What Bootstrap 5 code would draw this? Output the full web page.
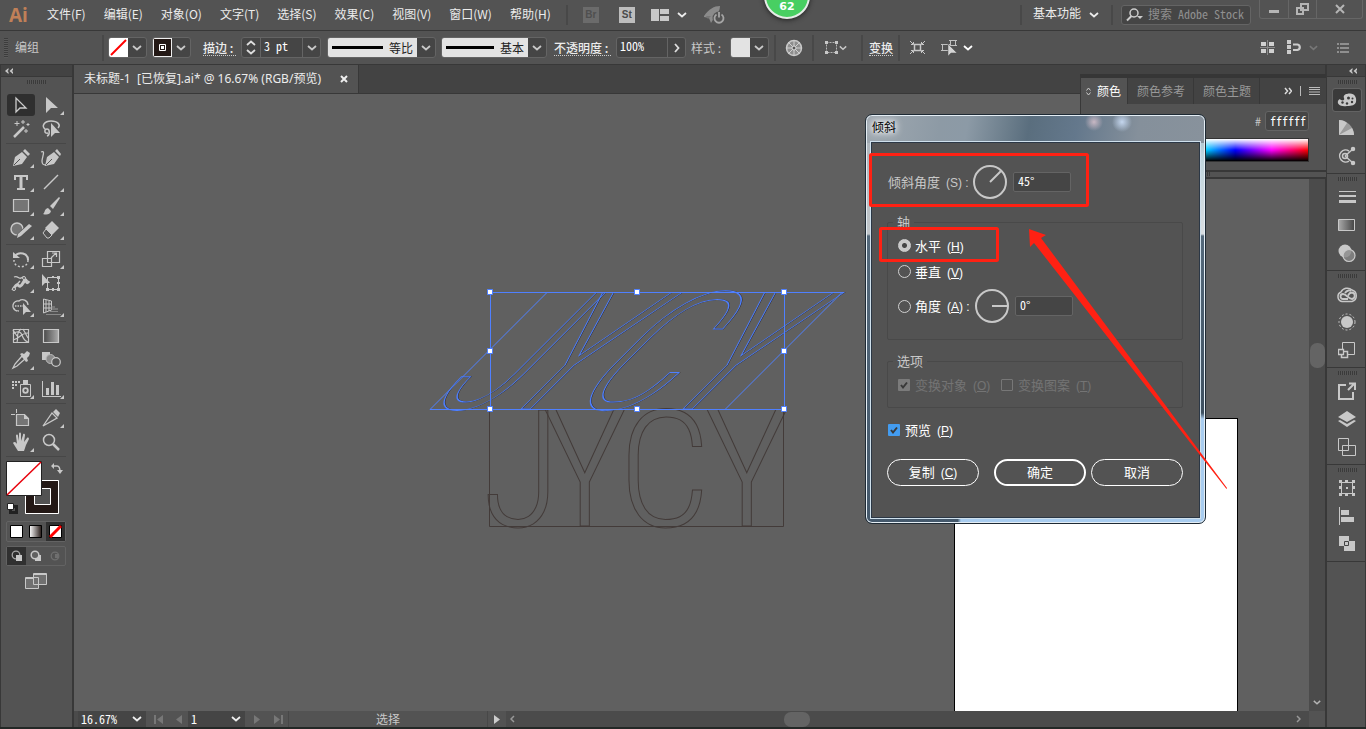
<!DOCTYPE html>
<html lang="zh-CN">
<head>
<meta charset="utf-8">
<meta name="viewport" content="width=device-width, initial-scale=1">
<title>未标题-1 [已恢复].ai</title>
<link href="https://cdn.jsdelivr.net/npm/bootstrap@5.3.0/dist/css/bootstrap.min.css" rel="stylesheet">
<style>
:root{--bar:#535353;--deep:#434343;--edge:#383838;--ink:#c8c8c8;--bright:#ececec;--box:#454545;--rim:#646464;--mono:"Noto Sans Mono CJK SC","Noto Sans CJK SC",monospace}
body{font:12px/16px "Noto Sans CJK SC","Liberation Sans",sans-serif;color:var(--ink);background:#232826;overflow:hidden}
.mono{font-family:var(--mono)}
svg{display:block;flex:none}
button.flat{background:none;border:0;padding:0;color:inherit;display:flex;align-items:center;justify-content:center}
a.menu-link{color:var(--bright);text-decoration:none}
.app-bar{height:31px;background:var(--bar);border-bottom:1px solid var(--edge)}
.menu-list{gap:18px;margin-left:19px;padding-bottom:2px}
.brand-mark{font:bold 19px/26px "Open Sans","Liberation Sans",sans-serif;color:#c08058;margin-left:9px}
.vline{width:2px;height:20px;background:#484848;flex:none}
.vline.tall{height:26px}
button.st-chip{width:16px;height:16px;font:bold 10px/16px "Liberation Sans",sans-serif;background:#bdbdbd;color:#4a4a4a}
button.st-chip.dim{background:#6b6b6b;color:#4f4f4f}
.search-box{width:130px;height:20px;background:var(--box);border:1px solid var(--rim);border-radius:3px}
.search-box input{background:none;border:0;outline:0;padding:0 0 2px;width:104px;font:12px/16px var(--mono);color:#999}
.search-box input::placeholder{color:#8f8f8f;opacity:1}
.win-keys{border:1px solid #666;border-top:0;border-radius:0 0 3px 3px;height:19px;align-self:flex-start;margin-right:3px}
.win-keys button+button{border-left:1px solid #666}
.opt-bar{height:34px;background:var(--bar);border-bottom:1px solid var(--edge)}
.grip-v{width:4px;height:20px;background:repeating-linear-gradient(#3c3c3c 0 1px,#5b5b5b 1px 2px)}
.grip-h{width:19px;height:4px;background:repeating-linear-gradient(90deg,#3a3a3a 0 1px,#565656 1px 2px)}
.combo{height:21px;border:1px solid var(--rim);border-radius:3px;background:var(--box);overflow:hidden;display:flex;flex:none}
.combo>button.flat{width:18px}
.combo>button+input,.combo>input+button.flat{border-left:1px solid var(--rim)}
.combo input{background:none;border:0;outline:0;padding:0 0 3px 3px;font:12px/16px var(--mono);color:#fff;min-width:0}
.swatch{width:19px;height:19px}
.stroke-view{background:#e3e3e3;color:#222;gap:6px;padding:0 4px}
.dotted{border-bottom:1px dotted #ccc;color:var(--bright);line-height:15px;font-weight:500;white-space:nowrap}
.tool-dock{width:74px;background:var(--bar);border-left:1px solid var(--edge);border-right:2px solid var(--edge)}
.dock-head{height:12px;background:var(--deep);border-bottom:1px solid var(--edge);flex:none}
.tool-grid{display:grid;grid-template-columns:30px 30px}
.tool-grid button{height:24px;position:relative}
.tool-grid .has-more::after{content:"";position:absolute;right:2px;bottom:2px;border:solid transparent;border-width:0 0 4px 4px;border-bottom-color:var(--ink)}
.tool-grid .chosen::before{content:"";position:absolute;inset:1px 1px;background:#2f2f2f;border-radius:3px}
.tool-grid .chosen svg{position:relative}
.tool-rule{height:1px;margin:2px 0;background:#474747}
.key-row{border:1px solid #636363;border-radius:2px;height:20px}
.key-row button{flex:1}
.key-row button.chosen{background:#303030}
.tab-strip{height:29px;background:var(--deep);border-bottom:1px solid var(--edge)}
.doc-tab{background:var(--bar);border-right:1px solid var(--edge);padding:0 10px;gap:19px;color:var(--bright);height:28px;font-family:"Noto Sans","Noto Sans CJK SC",sans-serif;white-space:nowrap}
.board{background:#606060;overflow:hidden}
.artboard{position:absolute;right:71px;top:324px;width:284px;bottom:0;background:#fff;border:1px solid #000;border-bottom:0}
.artwork{position:absolute;left:356px;top:190px;overflow:visible}
.artwork text{font-family:"Roboto Condensed","Liberation Sans Narrow",sans-serif;font-weight:300;fill:none;stroke-width:1}
.scroll-v{width:16px;background:#4b4b4b;padding-bottom:6px}
.thumb-v{width:15px;height:25px;border-radius:7px;background:#646464;margin-top:249px}
.doc-edge{border-right:2px solid var(--edge)}
.foot-bar{height:16px;background:#4b4b4b}
.foot-bar input{background:var(--box);border:0;outline:0;padding:0 0 0 3px;font:12px/16px var(--mono);color:#fff;height:16px}
.foot-bar .step{background:var(--bar);width:22px;height:16px;color:#777}
.foot-bar .step.drop{background:var(--box);width:18px;color:#eee}
.thumb-h{width:26px;height:15px;border-radius:7px;background:#646464}
.right-dock{width:39px;background:var(--bar);border-right:1px solid var(--edge);flex:none}
.dock-set{height:97px;padding:3px 0 0 2px;border-bottom:1px solid var(--edge);gap:2px}
.dock-set button.flat{width:28px;height:28px}
.dock-set button.chosen{background:#3a3a3a;outline:1px solid #636363;border-radius:2px;height:22px;margin:3px 0}
.swatch-panel{position:absolute;right:40px;top:74px;width:246px;background:var(--bar);border-top:4px solid #363636;border-left:1px solid var(--edge)}
.panel-tabs{background:var(--deep);height:26px}
.panel-tabs button.ptab{height:26px;border-right:1px solid var(--edge);padding:0 8px 0 9px;color:#999}
.panel-tabs button.ptab.open{background:var(--bar);color:#fff;padding:0 6px 0 5px;gap:6px}
.hex-row{height:34px;padding-right:17px;gap:4px}
.hex-row input{width:44px;height:20px;border:1px solid var(--rim);border-radius:3px;background:var(--box);color:#fff;font:12px/16px var(--mono);padding:0 0 2px 4px;outline:0}
.spectrum{height:24px;margin:0 17px 8px 8px;border:1px solid #333;background:linear-gradient(#fff,rgba(255,255,255,0) 50%,rgba(0,0,0,0) 50%,#000),linear-gradient(90deg,red,#ff0,lime,cyan,blue,#f0f,red)}
.panel-next{height:9px;border-top:2px solid var(--edge);border-bottom:2px solid var(--edge);padding-left:110px}
.badge-ball{position:absolute;left:764px;top:-27px;width:46px;height:46px;border-radius:50%;background:#48cf62;border:2px solid #e6ece8;box-shadow:0 1px 5px #222;color:#fff;font:bold 11px/14px "DejaVu Sans",sans-serif;text-align:center;padding-top:25px}
.shear-box{position:absolute;right:160px;top:114px;width:341px;border:1px solid #1e2a34;border-radius:7px;box-shadow:inset 0 0 0 1px #e4edf4;padding:0 5px 5px;background:linear-gradient(90deg,transparent 27%,#a9cdf0 28%) 0 100%/100% 6px no-repeat,radial-gradient(circle at 228px 7px,#c8b8c4 0,transparent 9px),radial-gradient(circle at 256px 7px,#c4d6ee 0,transparent 10px),linear-gradient(100deg,#a0a9b1 0,#8d9aa5 22%,#8c9aa6 30%,#6b7d8b 42%,#5a6e7e 48%,#64788c 62%,#85909b 80%,#88929c 100%) 0 0/100% 28px no-repeat,linear-gradient(#8fa0ac,#a8c0c9 18px,#c0d6de 40px,#d8dde1 119px,#54697b 121px,#3e5060 298px,#a9cdf0 304px) 100% 0/8px 100% no-repeat,linear-gradient(#a9b1b8,#c0c5c9 119px,#54697b 121px,#44586b)}
.shear-head{height:27px;color:#000;padding:0 0 3px 1px;text-shadow:0 0 5px #fff,0 0 8px #fff,0 0 10px #fff}
.shear-body{background:var(--bar);border:1px solid #2b3745;outline:1px solid #cfe0ec;padding:14px 16px 30px 15px;font:13px/18px var(--mono);color:#fff;height:376px}
.shear-body label{white-space:nowrap}
.shear-body .hot{font:12px/16px "Liberation Sans",sans-serif;margin-left:6px}
.shear-body input[type=text]{width:58px;height:20px;background:var(--box);border:1px solid var(--rim);border-radius:2px;color:#fff;font:12px/16px var(--mono);padding:0 0 3px 4px;outline:0}
.shear-set{border:1px solid #494949;border-radius:2px;position:relative;padding:0 9px 0 10px}
.shear-set legend{position:absolute;left:5px;top:-10px;width:auto;margin:0;padding:0 4px;background:var(--bar);font-size:13px;line-height:18px;color:var(--ink);float:none}
input.ring{appearance:none;width:13px;height:13px;margin:0;border:1px solid #d0d0d0;border-radius:50%;flex:none}
input.ring:checked{background:radial-gradient(circle,#444 2px,#c8c8c8 3px)}
input.tick{appearance:none;width:12px;height:12px;margin:0;border:1px solid #d0d0d0;border-radius:1px;flex:none}
input.tick:disabled{border-color:#777}
input.tick:checked{border:0;background:#439cf0 url("data:image/svg+xml,%3Csvg xmlns='http://www.w3.org/2000/svg' viewBox='0 0 12 12'%3E%3Cpath d='M3 6l2 2.500 4-5' fill='none' stroke='%23383838' stroke-width='2'/%3E%3C/svg%3E")}
input.tick:checked:disabled{background-color:#7b7b7b}
.faded{color:#747474}
.pill{width:92px;height:27px;border:1px solid #fff;border-radius:14px;background:none;color:#fff;font:13px/18px var(--mono);padding:0 0 2px}
.pill.main{border-width:2px}
.callout-marks{position:absolute;left:0;top:37px;pointer-events:none;overflow:visible}
</style>
</head>
<body class="vh-100 d-flex flex-column position-relative">
<svg width="0" height="0" class="position-absolute" aria-hidden="true">
<symbol id="chev" viewBox="0 0 10 6"><path d="M1 1l4 3.500L9 1" fill="none" stroke="currentColor" stroke-width="1.800"/></symbol>
<symbol id="dbl" viewBox="0 0 8 6"><path d="M3.500 0L0 3l3.500 3V4L2.500 3l1-1zM8 0L4.500 3 8 6V4L7 3l1-1z" fill="currentColor"/></symbol>
</svg>

<header class="app-bar d-flex align-items-center flex-shrink-0">
<div class="brand-mark">Ai</div>
<nav class="d-flex menu-list">
<a class="menu-link" href="#">文件(F)</a><a class="menu-link" href="#">编辑(E)</a><a class="menu-link" href="#">对象(O)</a><a class="menu-link" href="#">文字(T)</a><a class="menu-link" href="#">选择(S)</a><a class="menu-link" href="#">效果(C)</a><a class="menu-link" href="#">视图(V)</a><a class="menu-link" href="#">窗口(W)</a><a class="menu-link" href="#">帮助(H)</a>
</nav>
<div class="vline" style="margin-left:15px"></div>
<div class="d-flex align-items-center" style="margin-left:15px">
<button class="flat st-chip dim">Br</button>
<button class="flat st-chip" style="margin-left:20px">St</button>
<button class="flat ms-3 gap-2" aria-label="排列文档"><svg width="18" height="12" fill="#c8c8c8"><path d="M0 0h8v12H0zM9 0h9v5H9zM9 7h9v5H9z"/></svg><svg width="10" height="6" color="#ececec"><use href="#chev"/></svg></button>
<button class="flat ms-3" aria-label="GPU 性能"><svg width="24" height="20"><path d="M1 11C6 4 11 1 17 1c0 4-2 8-6 12l-3 5-2-5-5-1z" fill="#8b8b8b"/><path d="M3 11h5l-3 3z" fill="#777"/><circle cx="16" cy="13" r="6.500" fill="#535353"/><path d="M13.500 9.500a4.500 4.500 0 1 0 5 0M16 7v5.500" fill="none" stroke="#a5a5a5" stroke-width="1.800"/></svg></button>
</div>
<div class="ms-auto d-flex align-items-center h-100">
<div class="vline"></div>
<button class="flat gap-2" style="margin:0 12px 4px 11px;color:#ececec">基本功能 <svg width="10" height="6" class="mt-1"><use href="#chev"/></svg></button>
<div class="vline"></div>
<label class="search-box d-flex align-items-center mx-2 px-1" aria-label="搜索"><svg width="18" height="14"><circle cx="8" cy="5" r="4" fill="none" stroke="#ccc" stroke-width="1.500"/><path d="M5.500 8L1 12.500" stroke="#ccc" stroke-width="2"/><path d="M11 8h6l-3 3z" fill="#ccc"/></svg><input class="ms-1" type="text" placeholder="搜索 Adobe Stock"></label>
<div class="win-keys d-flex">
<button class="flat" style="width:28px" aria-label="最小化"><svg width="10" height="10"><path d="M0 6h10v3H0z" fill="#b5b5b5"/></svg></button>
<button class="flat" style="width:28px" aria-label="还原"><svg width="13" height="12" fill="none" stroke="#b5b5b5" stroke-width="2"><path d="M5 1h7v6H5zM1 5h6v6H1z" fill="#535353"/></svg></button>
<button class="flat" style="width:46px" aria-label="关闭"><svg width="10" height="10"><path d="M1 1l8 8M9 1L1 9" stroke="#b5b5b5" stroke-width="2"/></svg></button>
</div>
</div>
</header>

<div class="opt-bar d-flex align-items-center flex-shrink-0">
<div class="grip-v ms-1"></div>
<span style="margin:0 63px 2px 7px">编组</span>
<div class="vline tall"></div>
<div class="combo ms-1"><svg class="swatch"><path d="M0 0h19v19H0z" fill="#fff"/><path d="M2 17L17 2" stroke="red" stroke-width="2"/></svg><button class="flat" aria-label="填色"><svg width="10" height="6"><use href="#chev"/></svg></button></div>
<div class="combo" style="margin-left:5px"><svg class="swatch"><path d="M0 0h19v19H0z" fill="#231815" stroke="#eee" stroke-width="2"/><path d="M6.500 6.500h6v6h-6z" fill="none" stroke="#fff"/><path d="M8 8h3v3H8z" fill="#fff"/></svg><button class="flat" aria-label="描边颜色"><svg width="10" height="6"><use href="#chev"/></svg></button></div>
<label class="dotted" style="margin:0 5px 0 12px;width:33px" for="weight">描边 :</label>
<div class="combo"><button class="flat" aria-label="增减"><svg width="10" height="15" fill="none" stroke="#ddd" stroke-width="1.800"><path d="M1 5l4-3.500L9 5M1 10l4 3.500L9 10"/></svg></button><input id="weight" type="text" value="3 pt" style="width:42px"><button class="flat" aria-label="粗细"><svg width="10" height="6"><use href="#chev"/></svg></button></div>
<div class="combo" style="margin-left:6px"><div class="stroke-view d-flex align-items-center"><svg width="51" height="3"><path d="M0 0h51v3H0z"/></svg>等比</div><button class="flat" aria-label="宽度配置"><svg width="10" height="6"><use href="#chev"/></svg></button></div>
<div class="combo" style="margin-left:5px"><div class="stroke-view d-flex align-items-center"><svg width="48" height="3"><path d="M0 0h48v3H0z"/></svg>基本</div><button class="flat" aria-label="画笔定义"><svg width="10" height="6"><use href="#chev"/></svg></button></div>
<label class="dotted" style="margin:0 5px 0 7px;width:57px" for="opac">不透明度 :</label>
<div class="combo"><input id="opac" type="text" value="100%" style="width:50px"><button class="flat" aria-label="不透明度滑块"><svg width="6" height="10"><path d="M1 1l3.500 4L1 9" fill="none" stroke="#ddd" stroke-width="1.800"/></svg></button></div>
<span style="margin:0 5px;width:34px">样式 :</span>
<div class="combo"><div class="swatch" style="background:#e3e3e3"></div><button class="flat" aria-label="图形样式"><svg width="10" height="6"><use href="#chev"/></svg></button></div>
<div class="vline tall" style="margin:0 9px 0 5px"></div>
<button class="flat" aria-label="重新着色"><svg width="18" height="18" fill="none"><circle cx="9" cy="9" r="7.500" fill="#8e8e8e" stroke="#c8c8c8" stroke-width="1.500"/><path d="M9 1v16M1 9h16M3.300 3.300l11.400 11.400M14.700 3.300L3.300 14.700" stroke="#d0d0d0"/><circle cx="9" cy="9" r="2" fill="#555" stroke="#ddd"/></svg></button>
<div class="vline tall" style="margin:0 10px 0 9px"></div>
<button class="flat" aria-label="对齐画板"><svg width="15" height="15" fill="none"><path d="M2.500 2.500h10v10h-10z" stroke="#b5b5b5" stroke-dasharray="2 1"/><path d="M1 1h3v3H1zM11 1h3v3h-3zM1 11h3v3H1zM11 11h3v3h-3z" fill="#c8c8c8"/></svg><svg width="8" height="6"><use href="#chev"/></svg></button>
<div class="vline tall" style="margin:0 6px 0 14px"></div>
<a href="#" class="dotted text-decoration-none">变换</a>
<div class="vline tall" style="margin:0 9px 0 5px"></div>
<button class="flat" aria-label="隔离"><svg width="17" height="15" fill="none" stroke="#c8c8c8"><path d="M5.500 4.500h6v6h-6z" stroke-width="1.500"/><path d="M1 1l3 3M16 1l-3 3M1 14l3-3M16 14l-3-3M2 4.500h2.500V2M15 4.500h-2.500V2M2 10.500h2.500V13M15 10.500h-2.500V13"/></svg></button>
<button class="flat" style="margin-left:15px" aria-label="选择类似对象"><svg width="17" height="17" fill="none" stroke="#c0c0c0"><path d="M1.500 5.500h6v6h-6zM9.500 1.500h5v5h-5zM0 5.500h9M0 11.500h9M8 1.500h8M8 6.500h8"/><path d="M7 5v12l3-3h6z" fill="#d5d5d5" stroke="#535353" stroke-width=".5"/></svg><svg width="10" height="6" style="margin-left:5px" color="#fff"><use href="#chev"/></svg></button>
<div class="ms-auto d-flex align-items-center" style="margin-right:17px">
<button class="flat" aria-label="对齐网格"><svg width="15" height="15"><path d="M1 2h5v4H1zM9 2h5v4H9zM1 9h5v4H1zM9 9h5v4H9z" fill="#d0d0d0"/><path d="M7.500 0v15M0 7.500h15" stroke="#888"/></svg></button>
<button class="flat" style="margin-left:12px" aria-label="贴紧"><svg width="16" height="15"><path d="M0 0h4v4H0zM0 5h4v4H0zM0 10h4v4H0z" fill="#ccc"/><path d="M6 4.500h4.500a2.800 2.800 0 0 1 0 5.500H6" fill="none" stroke="#ccc" stroke-width="2.200"/></svg><svg width="9" height="6" style="margin-left:6px" color="#777"><use href="#chev"/></svg></button>
<button class="flat" style="margin-left:19px" aria-label="控制栏菜单"><svg width="12" height="10"><path d="M0 1h2M0 5h2M0 9h2M3 1h9M3 5h9M3 9h9" stroke="#ccc" stroke-width="1.200"/></svg></button>
</div>
</div>

<main class="d-flex flex-grow-1" style="min-height:0;margin-bottom:2px">
<aside class="tool-dock d-flex flex-column flex-shrink-0">
<div class="dock-head d-flex align-items-center ps-1"><button class="flat" aria-label="折叠"><svg width="8" height="6"><use href="#dbl"/></svg></button></div>
<div class="grip-h mx-auto" style="margin:3px 0 9px"></div>
<div style="margin:0 6px 0 5px">
<div class="tool-grid">
<button class="flat chosen" aria-label="选择"><svg width="24" height="22"><path d="M7 4v14l4-4h6z" fill="none" stroke="#ccc" stroke-width="1.300"/></svg></button>
<button class="flat has-more" aria-label="直接选择"><svg width="24" height="22"><path d="M7 3v16l5-5h7z" fill="#c8c8c8"/></svg></button>
<button class="flat" aria-label="魔棒"><svg width="24" height="22" stroke="#c8c8c8" fill="none"><path d="M5 19L15 9" stroke-width="2.500"/><path d="M8 3v5M5.500 5.500h5M14 2v4M12 4h4M19 5v3M17.500 6.500h3M17 11v4M15 13h4"/></svg></button>
<button class="flat" aria-label="套索"><svg width="24" height="22" fill="none" stroke="#c8c8c8" stroke-width="1.500"><path d="M7 12C1 8 6 3 12 3c7 0 10 4 7 7M9 15c-4 1-4-4-1-4s3 6 0 7"/><path d="M12 5v14l4-4h5z" fill="#c8c8c8" stroke="none"/></svg></button>
</div><div class="tool-rule"></div>
<div class="tool-grid">
<button class="flat has-more" aria-label="钢笔"><svg width="24" height="22"><path d="M4 19l2-9 7-5 5 5-5 7z" fill="#c8c8c8"/><path d="M14 4l2-2 5 5-2 2z" fill="#c8c8c8"/><path d="M5 18l6-6" stroke="#535353"/></svg></button>
<button class="flat" aria-label="曲率"><svg width="24" height="22"><path d="M6 19l2-9 7-5 5 5-5 7zM16 4l2-2 4 5-1 2z" fill="#c8c8c8"/><path d="M7 18l6-6" stroke="#535353"/><path d="M2 5c5-2 1 5 1 9s2 4 4 4" fill="none" stroke="#c8c8c8" stroke-width="1.300"/></svg></button>
<button class="flat has-more" aria-label="文字"><svg width="24" height="22"><path d="M5 4h14v5h-2V6h-3.500v11H16v2H8v-2h2.500V6H7v3H5z" fill="#c8c8c8"/></svg></button>
<button class="flat has-more" aria-label="直线段"><svg width="24" height="22"><path d="M5 18L19 4" stroke="#c8c8c8" stroke-width="1.500"/></svg></button>
<button class="flat has-more" aria-label="矩形"><svg width="24" height="22"><path d="M4.500 4.500h15v12h-15z" fill="#757575" stroke="#c8c8c8" stroke-width="1.200"/></svg></button>
<button class="flat has-more" aria-label="画笔"><svg width="24" height="22" fill="#c8c8c8"><path d="M11 11L20 2l1 1-7 11z"/><path d="M4 19c2-1 1-5 5-6l3 3c-1 4-5 4-8 3z"/></svg></button>
<button class="flat has-more" aria-label="Shaper"><svg width="24" height="22"><circle cx="8" cy="10" r="6" fill="#757575" stroke="#c8c8c8" stroke-width="1.500"/><path d="M9 18L21 6" stroke="#535353" stroke-width="5"/><path d="M8 19l1-4 11-10 3 2-11 10z" fill="#c8c8c8"/></svg></button>
<button class="flat has-more" aria-label="橡皮擦"><svg width="24" height="22"><path d="M13 2l7 7-7 7-7-7z" fill="#c8c8c8"/><path d="M7 10l6 6-3 3H8l-4-5z" fill="none" stroke="#c8c8c8"/></svg></button>
</div><div class="tool-rule"></div>
<div class="tool-grid">
<button class="flat has-more" aria-label="旋转"><svg width="24" height="22" fill="none" stroke="#c8c8c8"><path d="M6 8c4-5 13-3 13 4" stroke-width="2"/><path d="M19 12c0 9-14 9-14 0" stroke-width="1.500" stroke-dasharray="2 2"/><path d="M4 4v6h7z" fill="#c8c8c8" stroke="none"/></svg></button>
<button class="flat has-more" aria-label="比例缩放"><svg width="24" height="22" fill="none" stroke="#c8c8c8" stroke-width="1.200"><path d="M8.500 3.500h12v11h-12zM3.500 10.500h9v8h-9z"/><path d="M12 10l5-5M13 5h4.500v4"/></svg></button>
<button class="flat has-more" aria-label="宽度"><svg width="24" height="22"><path d="M4 18C10 6 9 20 14 11s2 4 6-2" fill="none" stroke="#c8c8c8" stroke-width="3"/><path d="M5 5c5-2 4 4 9 0l2 6M3 18l8-9" fill="none" stroke="#c8c8c8" stroke-width="1.300"/><circle cx="5" cy="17" r="1.500" fill="#535353" stroke="#ccc"/><circle cx="15" cy="6" r="1.500" fill="#535353" stroke="#ccc"/></svg></button>
<button class="flat" aria-label="自由变换"><svg width="24" height="22"><path d="M8.500 5.500h11v12h-11z" fill="none" stroke="#c8c8c8"/><path d="M18 4h3v3h-3zM18 16h3v3h-3zM7 16h3v3H7zM13 16h2v3h-2zM13 4h2v2h-2zM18 10h3v2h-3zM3 2v12l3-3h5z" fill="#c8c8c8"/></svg></button>
<button class="flat has-more" aria-label="形状生成器"><svg width="24" height="22" fill="none" stroke="#c8c8c8" stroke-width="1.300"><path d="M8 15a5 5 0 1 1 2-10 5.500 5.500 0 0 1 9 4M10 15c-2 0-5-1-5-3"/><path d="M6 10h10" stroke-dasharray="1.500 1"/><path d="M14 7v12l3-3h5z" fill="#c8c8c8" stroke="none"/></svg></button>
<button class="flat has-more" aria-label="透视网格"><svg width="24" height="22" fill="none" stroke="#c8c8c8"><path d="M4.500 3v14l8-3V5zM7 4v12M10 5v10M4 8h8M4 12h8"/><path d="M12 11h4M12 13h7" stroke="#999"/><path d="M11 15.500h8M7 18.500h15" stroke="#888"/></svg></button>
</div><div class="tool-rule"></div>
<div class="tool-grid">
<button class="flat" aria-label="网格"><svg width="24" height="22" fill="none" stroke="#c8c8c8" stroke-width="1.200"><path d="M4.500 4.500h15v13h-15z"/><path d="M4 9c5-4 8-2 9 1s2 6 6 7M12 4c-6 5-2 8-4 13M19 8c-8 0-8 6-15 7M4 5l4 6M14 4l5 9"/></svg></button>
<button class="flat" aria-label="渐变"><svg width="24" height="22"><defs><linearGradient id="gr1"><stop stop-color="#4a4a4a"/><stop offset="1" stop-color="#aaa"/></linearGradient></defs><path d="M4.500 4.500h15v13h-15z" fill="url(#gr1)" stroke="#c8c8c8" stroke-width="1.200"/></svg></button>
<button class="flat has-more" aria-label="吸管"><svg width="24" height="22"><path d="M4 19l2-4 7-8 3 3-8 7z" fill="none" stroke="#c8c8c8" stroke-width="1.300"/><path d="M11 5l2-1 2 1 3-3 3 2-1 3-2 2 1 3-2 1z" fill="#c8c8c8"/></svg></button>
<button class="flat" aria-label="混合"><svg width="24" height="22"><path d="M3 3h8v8H3z" fill="#c8c8c8"/><circle cx="11.500" cy="10" r="4.500" fill="#8a8a8a" stroke="#bbb"/><circle cx="17" cy="13" r="4.300" fill="#535353" stroke="#c8c8c8" stroke-width="1.200"/></svg></button>
</div><div class="tool-rule"></div>
<div class="tool-grid">
<button class="flat has-more" aria-label="符号喷枪"><svg width="24" height="22"><path d="M3 3h2v2H3zM6 3h2v2H6zM9 3h2v2H9zM3 6h2v2H3zM6 6h2v2H6zM3 9h2v2H3zM14 2h5v4h-5z" fill="#c8c8c8"/><path d="M11.500 6.500h10v12h-10z" fill="none" stroke="#c8c8c8"/><circle cx="16.500" cy="12.500" r="2.300" fill="none" stroke="#c8c8c8" stroke-width="1.800"/></svg></button>
<button class="flat has-more" aria-label="柱形图"><svg width="24" height="22" fill="#c8c8c8"><path d="M3 3h1v15h18v1H3zM7 10h3v7H7zM12 4h3v13h-3zM17 7h3v10h-3z"/></svg></button>
</div><div class="tool-rule"></div>
<div class="tool-grid">
<button class="flat" aria-label="画板"><svg width="24" height="22"><path d="M7.500 7.500h8l4 4v7h-12z" fill="#757575" stroke="#c8c8c8" stroke-width="1.200"/><path d="M15 7v5h5z" fill="#c8c8c8"/><path d="M7.500 2v4M2 7.500h4" stroke="#c8c8c8"/></svg></button>
<button class="flat has-more" aria-label="切片"><svg width="24" height="22"><path d="M4 19L13 6l5 5z" fill="none" stroke="#c8c8c8" stroke-width="1.300"/><path d="M14 5l3-3 4 4-2 4z" fill="#c8c8c8"/></svg></button>
<button class="flat has-more" aria-label="抓手"><svg width="24" height="22"><path d="M9 20L4 12c1-2 3-1 4 1L7 5c0-2 2-2 2 0l1 5V3c0-2 2-2 2 0v7l2-6c0-2 2-1 2 0l-1 7 3-4c1-1 2 0 2 1l-3 6-2 6z" fill="#c8c8c8"/></svg></button>
<button class="flat" aria-label="缩放"><svg width="24" height="22" fill="none" stroke="#c8c8c8"><circle cx="10" cy="9" r="5.500" stroke-width="1.500"/><path d="M14 13l6 6" stroke-width="2.500"/></svg></button>
</div><div class="tool-rule"></div>
<svg width="60" height="60" viewBox="6 459 60 60"><path d="M25.500 480.500h33v33h-33z" fill="#fff" stroke="#fff"/><path d="M26 481h32v32H26z" fill="#231815"/><path d="M34.500 488.500h16v16h-16z" fill="#535353" stroke="#fff"/><path d="M6.500 461.500h35v34h-35z" fill="#fff" stroke="#222"/><path d="M7 495L41 462" stroke="#e8000a" stroke-width="1.500"/><path d="M53 466h4q3 0 3 6" fill="none" stroke="#c8c8c8" stroke-width="1.500"/><path d="M54 463v6l-3-3zM57 470h6l-3 4z" fill="#c8c8c8"/><path d="M10.500 506.500h6v6h-6z" fill="none" stroke="#222" stroke-width="3"/><path d="M7.500 503.500h6v6h-6z" fill="#fff" stroke="#222"/></svg>
<div class="key-row d-flex" style="margin-top:2px;height:21px">
<button class="flat" aria-label="颜色"><svg width="13" height="13"><path d="M.5.500h12v12H.5z" fill="#fff" stroke="#000"/></svg></button>
<button class="flat" aria-label="渐变填色"><svg width="13" height="13"><defs><linearGradient id="gr2"><stop stop-color="#fff"/><stop offset="1" stop-color="#231815"/></linearGradient></defs><path d="M.5.500h12v12H.5z" fill="url(#gr2)" stroke="#000"/></svg></button>
<button class="flat chosen" aria-label="无"><svg width="13" height="13"><path d="M.5.500h12v12H.5z" fill="#fff" stroke="#000"/><path d="M1 12L12 1" stroke="red" stroke-width="3"/></svg></button>
</div>
<div class="key-row d-flex mt-1">
<button class="flat chosen" aria-label="正常绘图"><svg width="12" height="12"><circle cx="5" cy="5" r="3.800" fill="none" stroke="#a8a8a8" stroke-width="1.300"/><path d="M5 5h6v6H5z" fill="#c8c8c8"/></svg></button>
<button class="flat" aria-label="背面绘图"><svg width="12" height="12"><path d="M5 5h6v6H5z" fill="#c8c8c8"/><circle cx="5" cy="5" r="3.800" fill="#606060" stroke="#c8c8c8" stroke-width="1.500"/></svg></button>
<button class="flat" aria-label="内部绘图"><svg width="12" height="12"><circle cx="6" cy="6" r="3.800" fill="none" stroke="#6f6f6f" stroke-width="1.300"/><path d="M6 4h3v4H6z" fill="#6f6f6f"/></svg></button>
</div>
<button class="flat mx-auto" style="margin-top:7px" aria-label="屏幕模式"><svg width="24" height="17" fill="#707070" stroke="#c8c8c8"><path d="M1.500 4.500h13v11h-13zM9.500.500h13v11h-13z"/><path d="M1 5.500h8M9 1.500h14"/></svg></button>
</div>
</aside>

<section class="d-flex flex-column flex-grow-1 doc-edge" style="min-width:0">
<div class="tab-strip d-flex flex-shrink-0"><div class="doc-tab d-flex align-items-center"><span>未标题-1&nbsp; [已恢复].ai* @ 16.67% (RGB/预览)</span><button class="flat" aria-label="关闭文档"><svg width="8" height="8"><path d="M1 1l6 6M7 1L1 7" stroke="#eee" stroke-width="2"/></svg></button></div></div>
<div class="d-flex flex-grow-1" style="min-height:0">
<div class="board flex-grow-1 position-relative">
<div class="artboard"></div>
<svg class="artwork" width="415" height="250" viewBox="430 284 415 250">
<path d="M489.500 409v117.500h294V409" fill="none" stroke="#433b39"/>
<text x="482 542 618 704" y="526" font-size="164" stroke="#433b39">JYCY</text>
<g transform="translate(408.500 409) skewX(-45)"><text x="15 75 151 237" y="0" font-size="164" stroke="#2b2523">JYCY</text></g>
<g transform="translate(408 409) skewX(-45)"><text x="15 75 151 237" y="0" font-size="164" stroke="#4f80ff">JYCY</text></g>
<g fill="none" stroke="#4f80ff"><path d="M430 409.500L547.500 292M725 409.500L842 292.500"/><path d="M430 409.500h354M490 292.500h351M490.500 292v117M784.500 292v117"/></g>
<g fill="#fff" stroke="#4f80ff"><path d="M487.500 289.500h5v5h-5zM634.500 289.500h5v5h-5zM781.500 289.500h5v5h-5zM487.500 348.500h5v5h-5zM781.500 348.500h5v5h-5zM487.500 406.500h5v5h-5zM634.500 406.500h5v5h-5zM781.500 406.500h5v5h-5z"/></g>
</svg>
</div>
<div class="scroll-v d-flex flex-column align-items-center flex-shrink-0"><div class="thumb-v"></div><svg class="mt-auto" width="8" height="5" color="#b5b5b5"><use href="#chev"/></svg></div>
</div>
<div class="foot-bar d-flex align-items-center flex-shrink-0">
<input type="text" value="16.67%" aria-label="缩放级别" style="width:50px;margin-left:4px">
<button class="flat step drop" aria-label="选择缩放"><svg width="10" height="6"><use href="#chev"/></svg></button>
<button class="flat step" style="width:24px" aria-label="首项"><svg width="9" height="9" fill="currentColor"><path d="M0 0h2v9H0zM9 0v9L3 4.500z"/></svg></button>
<button class="flat step" style="width:18px" aria-label="上一项"><svg width="6" height="9" fill="currentColor"><path d="M6 0v9L0 4.500z"/></svg></button>
<input type="text" value="1" aria-label="画板导航" style="width:39px">
<button class="flat step drop" aria-label="选择画板"><svg width="10" height="6"><use href="#chev"/></svg></button>
<button class="flat step" style="width:23px" aria-label="下一项"><svg width="6" height="9" fill="currentColor"><path d="M0 0v9l6-4.500z"/></svg></button>
<button class="flat step" style="width:20px" aria-label="末项"><svg width="9" height="9" fill="currentColor"><path d="M7 0h2v9H7zM0 0v9l6-4.500z"/></svg></button>
<div class="text-center" style="width:200px;background:#535353;border-left:1px solid #484848;border-right:1px solid #484848">选择</div>
<button class="flat step" style="width:18px;color:#ccc" aria-label="状态菜单"><svg width="6" height="9" fill="currentColor"><path d="M0 0v9l6-4.500z"/></svg></button>
<div class="d-flex align-items-center flex-grow-1 justify-content-between px-1"><svg width="5" height="8"><path d="M4 1L1 4l3 3" fill="none" stroke="#999" stroke-width="1.500"/></svg><div class="thumb-h" style="margin-right:218px"></div><svg class="me-1" width="5" height="8"><path d="M1 1l3 3-3 3" fill="none" stroke="#999" stroke-width="1.500"/></svg></div>
<div style="width:16px;height:16px;background:#535353"></div>
</div>
</section>

<aside class="right-dock d-flex flex-column">
<div class="dock-head d-flex align-items-center justify-content-end pe-1"><button class="flat me-1" aria-label="展开面板"><svg width="8" height="6"><use href="#dbl"/></svg></button></div>
<div class="dock-set d-flex flex-column align-items-center"><div class="grip-h"></div><div>
<button class="flat chosen" aria-label="颜色"><svg width="20" height="16"><path d="M10 2c7-2 10 3 9 8-1 3-4 4-9 4C3 15 0 12 1 9c1-2 2-2 3-1 2 1 4 0 3-2s1-4 3-4z" fill="#c8c8c8"/><g fill="#3a3a3a"><circle cx="11.500" cy="6" r="1.500"/><circle cx="15.500" cy="6.500" r="1"/><circle cx="15" cy="10" r="1.200"/><circle cx="10" cy="11.500" r="1.200"/><circle cx="5.500" cy="10.500" r="1.200"/></g></svg></button>
<button class="flat" aria-label="颜色参考"><svg width="18" height="18"><path d="M1 1c8 0 15 7 15 15H1z" fill="#9a9a9a"/><path d="M1 1c3 0 6 1 8 3L1 16zM1 16h15c0-3-1-5-2-7z" fill="#c8c8c8"/></svg></button>
<button class="flat" aria-label="颜色主题"><svg width="20" height="20" fill="none" stroke="#c8c8c8" stroke-width="1.500"><path d="M12 5a6 6 0 1 0 0 10"/><circle cx="8" cy="10" r="2.500"/><path d="M8 10l8-7M8 10l8 7"/><g fill="#c8c8c8"><circle cx="16" cy="3" r="1.500"/><circle cx="16" cy="17" r="1.500"/></g></svg></button>
</div></div>
<div class="dock-set d-flex flex-column align-items-center"><div class="grip-h"></div><div>
<button class="flat" aria-label="描边"><svg width="17" height="12" fill="#c8c8c8"><path d="M0 0h17v1H0zM0 4h17v2H0zM0 9h17v3H0z"/></svg></button>
<button class="flat" aria-label="渐变"><svg width="18" height="13"><path d="M.5.500h16v11H.5z" fill="url(#gr3)" stroke="#c8c8c8"/><defs><linearGradient id="gr3"><stop stop-color="#aaa"/><stop offset="1" stop-color="#444"/></linearGradient></defs></svg></button>
<button class="flat" aria-label="透明度"><svg width="20" height="19"><circle cx="8" cy="7" r="6.500" fill="#c8c8c8"/><circle cx="12" cy="11.500" r="6" fill="#888" fill-opacity=".8" stroke="#c8c8c8" stroke-width="1.200"/></svg></button>
</div></div>
<div class="dock-set d-flex flex-column align-items-center"><div class="grip-h"></div><div>
<button class="flat" aria-label="库"><svg width="22" height="17"><path d="M6 15.500a5 5 0 0 1-1-9.500A7 7 0 0 1 16 4a6 6 0 0 1 0 11.500z" fill="none" stroke="#c8c8c8" stroke-width="1.500"/><path d="M12 13H7a2.500 2.500 0 0 1 0-5c3 0 6 5 9 5a3.300 3.300 0 0 0 0-6.500c-3 0-3 2-4 3M9 7c2-3 5-3 6-2" fill="none" stroke="#c8c8c8" stroke-width="1.800"/></svg></button>
<button class="flat" aria-label="外观"><svg width="18" height="18"><circle cx="9" cy="9" r="6" fill="#c8c8c8"/><circle cx="9" cy="9" r="8" fill="none" stroke="#c8c8c8" stroke-dasharray="2 2"/></svg></button>
<button class="flat" aria-label="图形样式面板"><svg width="18" height="17" fill="#535353" stroke="#c8c8c8"><path d="M4.500.500h12v12h-12z"/><path d="M3.500 9.500h6v6h-6z" stroke-width="1.500"/><path d="M.5 7.500h5v5h-5z" stroke-width="1.300"/></svg></button>
</div></div>
<div class="dock-set d-flex flex-column align-items-center"><div class="grip-h"></div><div>
<button class="flat" aria-label="资源导出"><svg width="18" height="18" fill="none" stroke="#c8c8c8" stroke-width="2"><path d="M8 3H1v14h14v-7"/><path d="M10 8l6-6M11 1.500h6V8"/></svg></button>
<button class="flat" aria-label="图层"><svg width="18" height="18" fill="#c8c8c8"><path d="M9 1l9 6-9 5-9-5zM0 11l2-1 7 4 7-4 2 1-9 6z"/></svg></button>
<button class="flat" aria-label="画板面板"><svg width="18" height="18" fill="#535353" stroke="#c8c8c8"><path d="M.5.500h10v12H.5zM4.500 7.500h13v10h-13z"/></svg></button>
</div></div>
<div class="dock-set d-flex flex-column align-items-center"><div class="grip-h"></div><div>
<button class="flat" aria-label="变换面板"><svg width="16" height="16"><path d="M2.500 2.500h11v11h-11z" fill="none" stroke="#c8c8c8"/><path d="M0 0h3v3H0zM6 0h3v3H6zM13 0h3v3h-3zM0 6h3v3H0zM13 6h3v3h-3zM0 13h3v3H0zM6 13h3v3H6zM13 13h3v3h-3zM7 7h2v2H7z" fill="#c8c8c8"/></svg></button>
<button class="flat" aria-label="对齐"><svg width="16" height="18" fill="#c8c8c8"><path d="M0 0h1v18H0zM2 3h8v5H2zM2 10h13v5H2z"/></svg></button>
<button class="flat" aria-label="路径查找器"><svg width="16" height="16"><path d="M0 0h10v10H0zM5 5h11v10H5z" fill="#c8c8c8"/><path d="M5.500 5.500h4v4h-4z" fill="#c8c8c8" stroke="#444"/></svg></button>
</div></div>
</aside>
</main>

<section class="swatch-panel" aria-label="颜色面板">
<div class="panel-tabs d-flex">
<button class="flat ptab open"><svg width="5" height="9" fill="none" stroke="#ccc"><path d="M.5 3.500l2-2.500 2 2.500M.5 5.500l2 2.500 2-2.500"/></svg>颜色</button><button class="flat ptab">颜色参考</button><button class="flat ptab">颜色主题</button>
<div class="ms-auto d-flex align-items-center gap-2" style="margin-right:6px"><svg width="8" height="8" fill="none" stroke="#ddd" stroke-width="1.500"><path d="M1 1l2.500 3L1 7M5 1l2.500 3L5 7"/></svg><svg width="1" height="10"><path d="M0 0h1v10H0z" fill="#bbb"/></svg><svg width="11" height="8"><path d="M0 .5h11M0 2.500h11M0 5h11M0 7.500h11" stroke="#bbb"/></svg></div>
</div>
<div class="hex-row d-flex align-items-center justify-content-end"><label for="hex" class="mono">#</label><input id="hex" type="text" value="ffffff"></div>
<div class="spectrum"></div>
<div class="panel-next"><div class="grip-h"></div></div>
</section>

<section class="shear-box" role="dialog" aria-label="倾斜">
<div class="shear-head d-flex align-items-center">倾斜</div>
<div class="shear-body">
<div class="d-flex align-items-center" style="height:50px;padding-left:1px"><label for="ang" style="width:84px;color:#c8c8c8">倾斜角度<span class="hot">(S) :</span></label><svg width="36" height="36" fill="none" stroke="#c8c8c8" stroke-width="2"><circle cx="18" cy="18" r="16"/><path d="M18 18L29 7"/></svg><input id="ang" style="margin-left:5px" type="text" value="45°"></div>
<fieldset class="shear-set" style="margin-top:15px;height:118px"><legend>轴</legend>
<div class="d-flex align-items-center" style="gap:4px;margin-top:13px;height:19px"><input class="ring" type="radio" name="ax" id="ah" checked><label for="ah">水平<span class="hot">(<u>H</u>)</span></label></div>
<div class="d-flex align-items-center" style="gap:4px;margin-top:7px;height:19px"><input class="ring" type="radio" name="ax" id="av"><label for="av">垂直<span class="hot">(<u>V</u>)</span></label></div>
<div class="d-flex align-items-center" style="margin-top:6px;height:38px"><input class="ring" type="radio" name="ax" id="aa"><label for="aa" style="width:59px;margin-left:4px">角度<span class="hot">(<u>A</u>) :</span></label><svg width="36" height="36" fill="none" stroke="#c8c8c8" stroke-width="2"><circle cx="18" cy="18" r="16"/><path d="M18 18h15"/></svg><input style="margin-left:5px" type="text" value="0°" aria-label="轴角度"></div>
</fieldset>
<fieldset class="shear-set" style="margin-top:21px;height:47px"><legend>选项</legend>
<div class="d-flex align-items-center faded" style="gap:5px;margin-top:13px;height:19px"><input class="tick" type="checkbox" id="ob" checked disabled><label for="ob" style="width:77px">变换对象<span class="hot">(<u>O</u>)</span></label><input class="tick ms-1" type="checkbox" id="pt" disabled><label for="pt">变换图案<span class="hot">(<u>T</u>)</span></label></div>
</fieldset>
<div class="d-flex align-items-center" style="gap:5px;margin-top:12px;height:19px;padding-left:1px"><input class="tick" type="checkbox" id="pv" checked><label for="pv">预览<span class="hot">(<u>P</u>)</span></label></div>
<div class="d-flex justify-content-between" style="margin-top:20px"><button class="pill">复制<span class="hot">(<u>C</u>)</span></button><div class="d-flex" style="gap:5px"><button class="pill main">确定</button><button class="pill">取消</button></div></div>
</div>
<svg class="callout-marks" width="364" height="340" viewBox="866 152 364 340"><g fill="none" stroke="#ff2113" stroke-width="3"><rect x="870.500" y="154.500" width="217" height="51" rx="1"/><rect x="880.500" y="228.500" width="117" height="32" rx="1"/></g><path d="M1029 229l17 6-5 3L1227 488l-.5 1L1034 243l-4 4z" fill="#ff2113"/></svg>
</section>
<div class="badge-ball">62</div>
<script src="https://cdn.jsdelivr.net/npm/bootstrap@5.3.0/dist/js/bootstrap.bundle.min.js"></script>
</body>
</html>
